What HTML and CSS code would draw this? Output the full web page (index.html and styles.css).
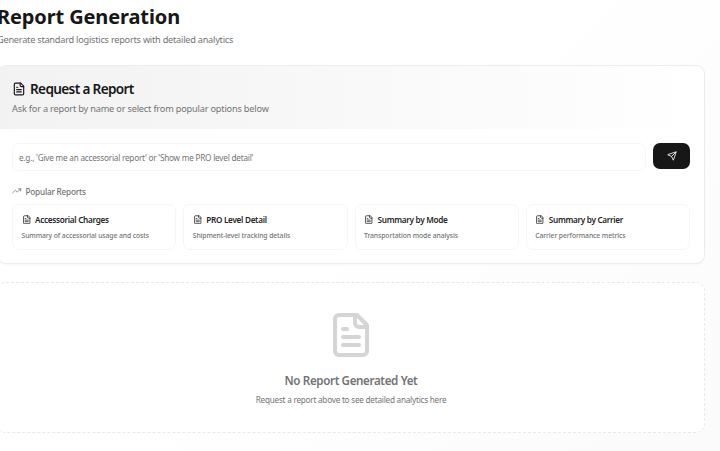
FILE: index.html
```
<!DOCTYPE html>
<html lang="en">
<head>
<meta charset="utf-8">
<title>Report Generation</title>
<link rel="stylesheet" href="styles.css">
</head>
<body>
<svg class="defs" aria-hidden="true">
  <symbol id="file" viewBox="0 0 24 24">
    <path d="M15 2H6a2 2 0 0 0-2 2v16a2 2 0 0 0 2 2h12a2 2 0 0 0 2-2V7Z"/>
    <path d="M14 2v4a2 2 0 0 0 2 2h4"/>
    <path d="M10 9H8"/><path d="M16 13H8"/><path d="M16 17H8"/>
  </symbol>
</svg>
<main class="page">
  <header class="page-head">
    <h1>Report Generation</h1>
    <p>Generate standard logistics reports with detailed analytics</p>
  </header>
  <section class="card">
    <div class="card-head">
      <h2><svg class="icon"><use href="#file"/></svg><span>Request a Report</span></h2>
      <p>Ask for a report by name or select from popular options below</p>
    </div>
    <div class="card-body">
      <div class="ask">
        <div class="field">e.g., 'Give me an accessorial report' or 'Show me PRO level detail'</div>
        <button class="send" aria-label="Send"><svg class="icon" viewBox="0 0 24 24"><path d="M14.536 21.686a.5.5 0 0 0 .937-.024l6.5-19a.496.496 0 0 0-.635-.635l-19 6.5a.5.5 0 0 0-.024.937l7.93 3.18a2 2 0 0 1 1.112 1.11z"/><path d="m21.854 2.147-10.94 10.939"/></svg></button>
      </div>
      <div class="popular"><svg class="icon" viewBox="0 0 24 24"><path d="m22 7-8.5 8.5-5-5L2 17"/><path d="M16 7h6v6"/></svg><span>Popular Reports</span></div>
      <div class="grid">
        <div class="option"><h3><svg class="icon"><use href="#file"/></svg><span>Accessorial Charges</span></h3><p>Summary of accessorial usage and costs</p></div>
        <div class="option"><h3><svg class="icon"><use href="#file"/></svg><span>PRO Level Detail</span></h3><p>Shipment-level tracking details</p></div>
        <div class="option"><h3><svg class="icon"><use href="#file"/></svg><span>Summary by Mode</span></h3><p>Transportation mode analysis</p></div>
        <div class="option"><h3><svg class="icon"><use href="#file"/></svg><span>Summary by Carrier</span></h3><p>Carrier performance metrics</p></div>
      </div>
    </div>
  </section>
  <section class="empty">
    <svg class="icon"><use href="#file"/></svg>
    <h2>No Report Generated Yet</h2>
    <p>Request a report above to see detailed analytics here</p>
  </section>
</main>
</body>
</html>
```
FILE: styles.css
```
* { box-sizing: border-box; }
html, body { height: 451px; overflow: hidden; }
body {
  margin: 0;
  background: linear-gradient(135deg, #fff 45%, #fbfbfb);
  color: #171717;
  font-family: "Noto Sans", "Open Sans", sans-serif;
}
h1, h2, h3, p { margin: 0; white-space: nowrap; }
.defs { position: absolute; width: 0; height: 0; }
.icon {
  flex: none;
  fill: none;
  stroke: currentColor;
  stroke-width: 2;
  stroke-linecap: round;
  stroke-linejoin: round;
}
.page { width: 708px; margin-left: -3px; }
.page-head { height: 65px; padding-top: 3px; }
h1 { font-size: 20px; line-height: 28px; font-weight: 700; letter-spacing: -0.12px; }
.page-head p { margin-top: 1px; font-size: 9.2px; line-height: 15px; color: #737373; letter-spacing: -0.24px; }
.card {
  height: 199px;
  border: 1px solid #ececec;
  border-radius: 9px;
  background: #fff;
  overflow: hidden;
  box-shadow: 0 1px 2px rgba(0, 0, 0, .03);
}
.card-head {
  height: 63px;
  padding: 14px 14px 0;
  background: linear-gradient(90deg, #f2f2f2, #fff);
}
.card-head h2 { display: flex; align-items: center; gap: 4px; font-size: 13.6px; line-height: 18px; font-weight: 600; letter-spacing: -0.65px; }
.card-head .icon { width: 14px; height: 14px; }
.card-head p { margin-top: 4px; font-size: 9.2px; line-height: 14px; color: #737373; letter-spacing: -0.19px; }
.card-body { padding: 14px 14px 0; }
.ask { display: flex; gap: 7px; align-items: flex-start; }
.field {
  flex: 1;
  height: 28px;
  padding: 0 6px;
  border: 1px solid #f6f6f6;
  border-radius: 7px;
  font-size: 8.2px;
  line-height: 27px;
  color: #737373;
  letter-spacing: -0.22px;
}
.send {
  display: grid;
  place-items: center;
  width: 37px;
  height: 26px;
  padding: 0;
  border: 0;
  border-radius: 7px;
  background: #171717;
  color: #fff;
}
.send .icon { width: 10px; height: 10px; }
.popular { display: flex; align-items: center; gap: 4px; height: 14px; margin-top: 13px; font-size: 8.2px; font-weight: 500; color: #737373; letter-spacing: -0.2px; }
.popular .icon { width: 9.5px; height: 9.5px; }
.grid { display: grid; grid-template-columns: repeat(4, 1fr); gap: 7px; margin-top: 6px; }
.option { height: 46px; padding: 8px 8.5px 0; border: 1px solid #f6f6f6; border-radius: 7px; }
.option h3 { display: flex; align-items: center; gap: 4px; font-size: 8.2px; line-height: 13px; font-weight: 600; letter-spacing: -0.3px; color: #262626; }
.option .icon { width: 9.5px; height: 9.5px; }
.option p { margin-top: 4px; font-size: 6.8px; line-height: 11px; font-weight: 500; color: #737373; letter-spacing: -0.09px; }
.empty {
  display: flex;
  flex-direction: column;
  align-items: center;
  height: 151px;
  margin-top: 18px;
  padding-top: 28px;
  border: 1px dashed #e8e8e8;
  border-radius: 9px;
  background: #fff;
  color: #737373;
}
.empty .icon { width: 48px; height: 48px; color: #d5d5d5; }
.empty h2 { margin-top: 13px; font-size: 11.6px; line-height: 17px; font-weight: 600; letter-spacing: -0.37px; }
.empty p { margin-top: 4px; font-size: 8.2px; line-height: 13px; letter-spacing: -0.24px; }
```
